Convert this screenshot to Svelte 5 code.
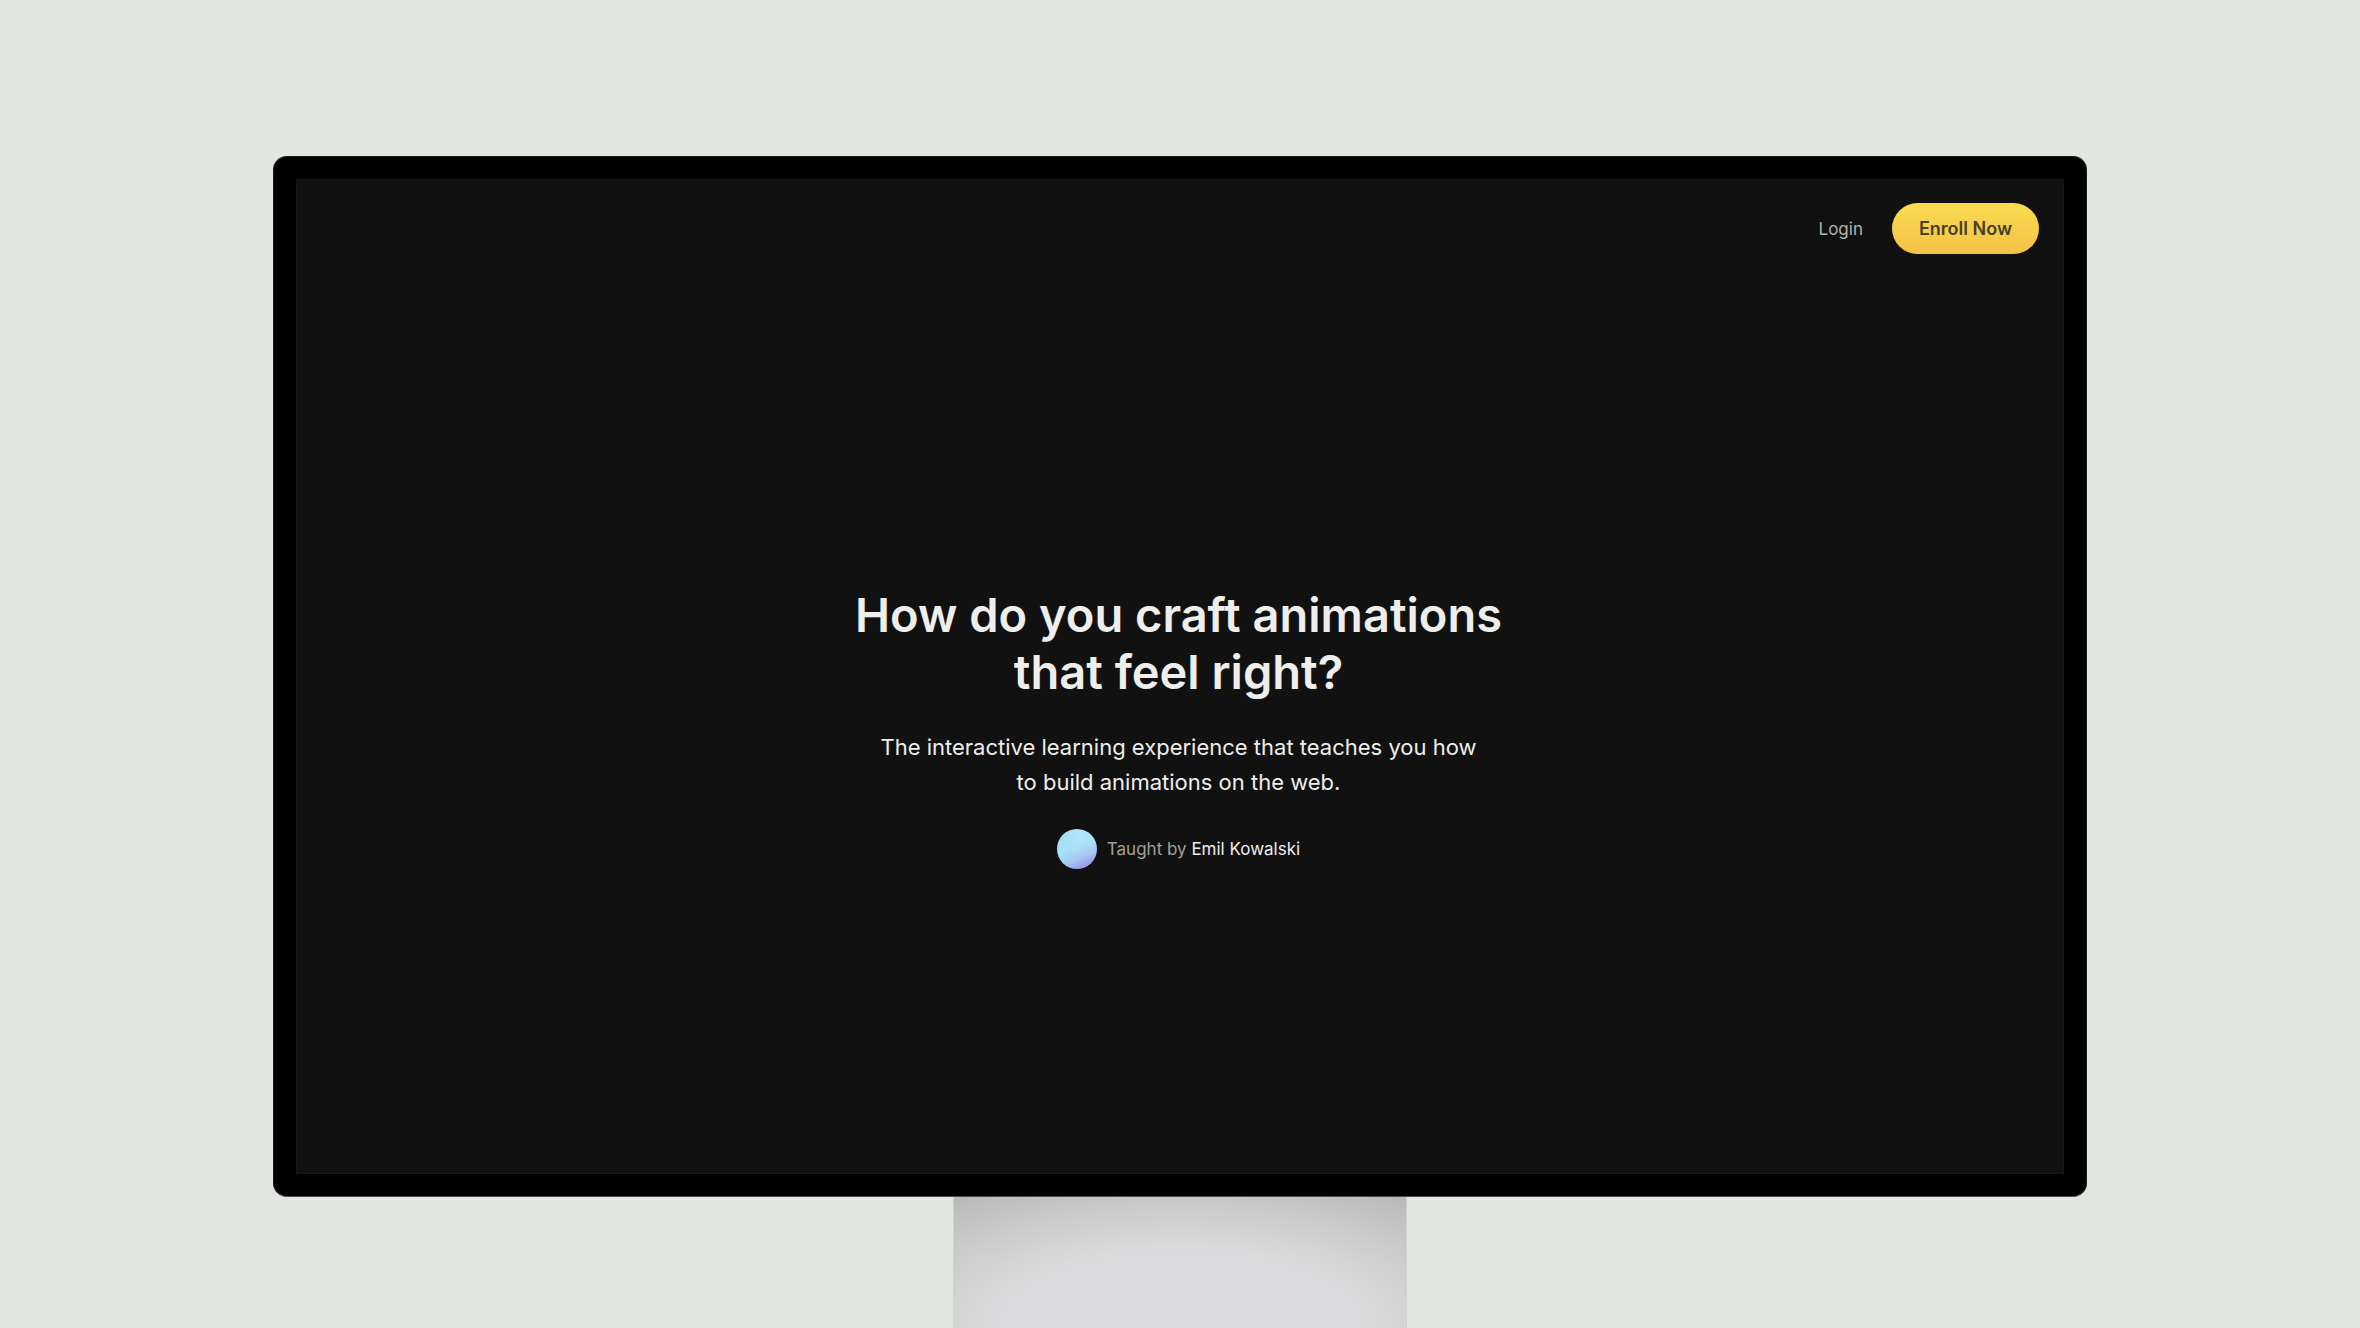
<script lang="ts">
	interface Instructor {
		name: string;
		href: string;
	}

	const instructor: Instructor = {
		name: 'Emil Kowalski',
		href: '#instructor'
	};
</script>

<div class="scene">
	<div class="monitor">
		<div class="screen">
			<header class="header">
				<a class="login" href="#login">Login</a>
				<button class="enroll" type="button">Enroll Now</button>
			</header>

			<main class="hero">
				<h1>How do you craft animations<br />that feel right?</h1>
				<p class="lead">
					The interactive learning experience that teaches you how<br />to build animations on the web.
				</p>
				<div class="instructor">
					<span class="avatar"></span>
					<span>Taught by <a href={instructor.href}>{instructor.name}</a></span>
				</div>
			</main>
		</div>
	</div>
	<div class="stand"></div>
</div>

<style>
	:global(body) {
		background: #e1e6e0;
	}

	.scene {
		box-sizing: border-box;
		min-height: 100vh;
		padding: 156px 273px 0;
		display: flex;
		flex-direction: column;
		align-items: center;
		background: #e1e6e0;
		font-family: Inter, "Liberation Sans", sans-serif;
	}

	.monitor {
		box-sizing: border-box;
		width: 100%;
		padding: 22px;
		background: #000;
		border: 1px solid #1c1c1c;
		border-bottom-color: #4a4b4a;
		border-radius: 14px;
	}

	.screen {
		box-sizing: border-box;
		aspect-ratio: 16 / 9;
		display: flex;
		flex-direction: column;
		background: #111;
		border: 1px solid #171717;
	}

	.header {
		display: flex;
		justify-content: flex-end;
		align-items: center;
		gap: 29px;
		padding: 23px 24px 29px;
	}

	.login {
		color: #b5b3ad;
		font-size: 17px;
		text-decoration: none;
	}

	.enroll {
		padding: 0 27px;
		border: 0;
		border-radius: 26px;
		background: linear-gradient(#fadb50, #f5c147);
		color: #473f26;
		font-family: inherit;
		font-size: 18px;
		font-weight: 600;
		line-height: 51px;
		cursor: pointer;
	}

	.hero {
		flex: 1;
		display: flex;
		flex-direction: column;
		align-items: center;
		justify-content: center;
		padding-right: 3px;
		text-align: center;
	}

	h1 {
		margin: 0;
		color: #eeeeec;
		font-size: 47px;
		font-weight: 600;
		line-height: 57px;
	}

	.lead {
		margin: 30px 0 29px;
		color: #eeeeec;
		font-size: 22px;
		line-height: 35px;
	}

	.instructor {
		display: flex;
		align-items: center;
		gap: 10px;
		color: #a3a19b;
		font-size: 17px;
	}

	.instructor a {
		color: #eeeeec;
		text-decoration: none;
	}

	.avatar {
		width: 40px;
		height: 40px;
		border-radius: 50%;
		background:
			radial-gradient(circle at 60% 10%, rgba(184, 228, 248, 0.8), transparent 50%),
			linear-gradient(155deg, #a5e0f8 45%, #a9c6f2 68%, #958ae4 92%);
	}

	.stand {
		box-sizing: border-box;
		flex: 1;
		width: 25%;
		min-height: 131px;
		border: 1px solid #d0d1d0;
		border-width: 0 1px;
		background: radial-gradient(
			ellipse 75% 110% at 50% 100%,
			#dadadc 55%,
			#d4d4d5 68%,
			#c7c7c8 90%,
			#b7b7b8 115%
		);
	}
</style>
